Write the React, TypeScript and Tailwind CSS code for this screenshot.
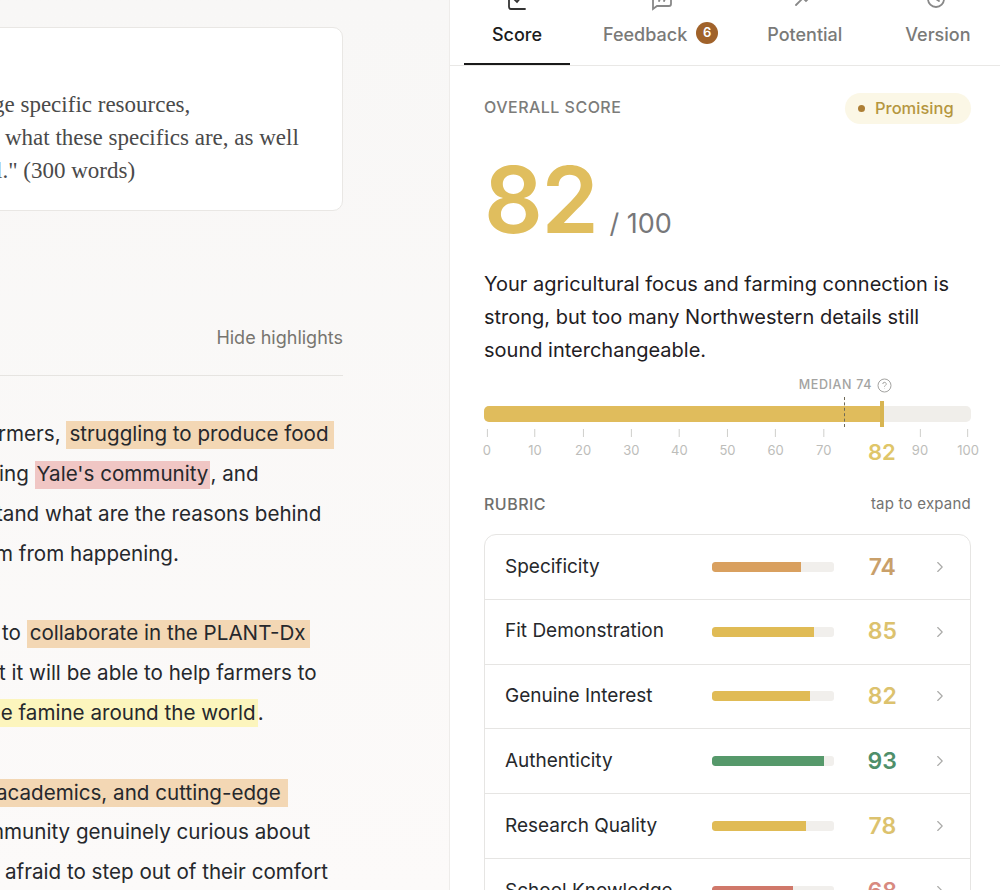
import React from 'react';
import { ChevronRight } from 'lucide-react';

const sans = { fontFamily: 'Inter, sans-serif' };

interface RubricRow {
  name: string;
  score: number;
  barClass: string;
  textClass: string;
}

const rows: RubricRow[] = [
  { name: 'Specificity', score: 74, barClass: 'bg-[#d9a05f]', textClass: 'text-[#c9a06a]' },
  { name: 'Fit Demonstration', score: 85, barClass: 'bg-[#e0bb55]', textClass: 'text-[#dcc26e]' },
  { name: 'Genuine Interest', score: 82, barClass: 'bg-[#e0bb55]', textClass: 'text-[#dcc26e]' },
  { name: 'Authenticity', score: 93, barClass: 'bg-[#56996b]', textClass: 'text-[#4f8f6a]' },
  { name: 'Research Quality', score: 78, barClass: 'bg-[#e0bb55]', textClass: 'text-[#dcc26e]' },
  { name: 'School Knowledge', score: 68, barClass: 'bg-[#d0786a]', textClass: 'text-[#d88a80]' },
];

const ticks = [0, 10, 20, 30, 40, 50, 60, 70, 80, 90, 100];

const Line: React.FC<{ className?: string; children: React.ReactNode }> = ({ className, children }) => (
  <div className={`h-[39.8px] flex items-center whitespace-nowrap ${className || ''}`}>{children}</div>
);

const Mark: React.FC<{ className: string; children: React.ReactNode }> = ({ className, children }) => (
  <span className={`h-7 flex items-center ${className}`}>{children}</span>
);

const App: React.FC = () => {
  return (
    <div className="w-[1000px] h-[890px] flex overflow-hidden bg-white text-[#1f1f1f]" style={sans}>
      {/* essay */}
      <div className="w-[450px] shrink-0 h-full bg-linear-to-b from-[#f8f7f6] to-[#fcfaf9] border-r border-[#eeecea] overflow-hidden pr-[106px] pt-[27px]">
        <div className="h-[184px] -ml-6 bg-white border border-[#e9e7e4] rounded-[10px] pt-[60px] font-['Liberation_Serif',serif] text-[23px] leading-[33px] text-[#4a4a4a] whitespace-nowrap">
          <div className="pl-[16px]">ge specific resources,</div>
          <div className="pl-[28px]">what these specifics are, as well</div>
          <div className="pl-[19px]">l." (300 words)</div>
        </div>
        <div className="mt-[115px] text-right text-[18px] leading-6 text-[#77756f]">Hide highlights</div>
        <div className="mt-[25px] border-t border-[#e6e4e1]" />
        <div className="mt-[39px] text-[20.6px] text-[#26282c]">
          <Line className="-ml-[2px]">rmers,&nbsp;<Mark className="bg-[#f3d7b4] pl-[3px] pr-[5px]">struggling to produce food</Mark></Line>
          <Line className="-ml-[1px]">ing&nbsp;<Mark className="bg-[#f0c6c4] px-[2px]">Yale's community</Mark>, and</Line>
          <Line className="-ml-[4px]">tand what are the reasons behind</Line>
          <Line className="-ml-[5px]">m from happening.</Line>
          <div className="h-[39.8px]" />
          <Line className="ml-[2px]">to&nbsp;<Mark className="bg-[#f3d7b4] pl-[3px] pr-[5px]">collaborate in the PLANT-Dx</Mark></Line>
          <Line className="-ml-[1px]">t it will be able to help farmers to</Line>
          <Line className="-ml-[11px]"><Mark className="bg-[#fcf5bd] pr-[2px]">ce famine around the world</Mark>.</Line>
          <div className="h-[39.8px]" />
          <Line className="-ml-[4px]"><Mark className="bg-[#f3d7b4] pr-[7px]">academics, and cutting-edge</Mark></Line>
          <Line className="-ml-[14px]">mmunity genuinely curious about</Line>
          <Line className="ml-[5px]">afraid to step out of their comfort</Line>
        </div>
      </div>

      {/* score panel */}
      <div className="flex-1 min-w-0 h-full flex flex-col">
        <div className="h-[66px] shrink-0 flex border-b border-[#e9e8e6] text-[18px] font-medium text-[#7a7a78]">
          <div className="w-[106px] ml-[14px] flex flex-col items-center relative text-[#1c1c1c] border-b-2 border-[#1a1a1a] h-[65px]">
            <svg className="absolute -top-[9px]" width="22" height="22" viewBox="0 0 22 22" fill="none" stroke="#333" strokeWidth="1.8" strokeLinecap="round">
              <path d="M3 3v13a2 2 0 0 0 2 2h14" />
              <path d="M8 8l3 3 5-6" />
            </svg>
            <span className="mt-[21px]">Score</span>
          </div>
          <div className="ml-[33px] flex items-start relative pt-[21px]">
            <svg className="absolute -top-[8px] left-[48px]" width="22" height="22" viewBox="0 0 22 22" fill="none" stroke="#888" strokeWidth="1.8" strokeLinecap="round">
              <path d="M2 3v14l4-3h12a2 2 0 0 0 2-2V3" />
              <path d="M8 9l1-2M13 9l1-2" />
            </svg>
            <span>Feedback</span>
            <span className="ml-[9px] mt-[1px] w-[22px] h-[22px] rounded-full bg-[#a0622a] text-white text-[13px] font-semibold flex items-center justify-center">6</span>
          </div>
          <div className="ml-[49px] pt-[21px] relative">
            <svg className="absolute -top-[8px] left-[26px]" width="26" height="22" viewBox="0 0 26 22" fill="none" stroke="#888" strokeWidth="1.8" strokeLinecap="round">
              <path d="M3 13l7-7 3 3 6-6" />
              <path d="M9 3l5 3" />
            </svg>
            <span>Potential</span>
          </div>
          <div className="ml-[63px] pt-[21px] relative">
            <svg className="absolute -top-[8px] left-[20px]" width="22" height="22" viewBox="0 0 22 22" fill="none" stroke="#888" strokeWidth="1.8" strokeLinecap="round">
              <circle cx="11" cy="7" r="8" />
              <path d="M11 3v4l3 2" />
            </svg>
            <span>Version</span>
          </div>
        </div>

        <div className="flex-1 min-h-0 overflow-hidden pl-[34px] pr-[29px]">
          <div className="mt-[25px] h-[32px] flex items-center justify-between">
            <span className="text-[16px] font-medium text-[#7c7c7a] tracking-[0.03em]">OVERALL SCORE</span>
            <span className="h-[31px] mt-[3px] w-[126px] rounded-full bg-[#fbf7e6] flex items-center gap-[10px] pl-[13px] text-[16.5px] font-medium text-[#b5963f]">
              <span className="w-[7px] h-[7px] rounded-full bg-[#ad7f36]" />
              Promising
            </span>
          </div>
          <div className="mt-[32px] flex items-end h-[90px]">
            <span className="text-[92px] leading-[90px] font-semibold text-[#e0be5e] tracking-[-0.015em]">82</span>
            <span className="ml-[12px] mb-[1px] text-[27px] text-[#77777a]">/ 100</span>
          </div>
          <p className="mt-[23px] text-[20px] leading-[33px] text-[#1f2023]">
            Your agricultural focus and farming connection is strong, but too many Northwestern details still sound interchangeable.
          </p>

          <div className="mt-[10px] h-[17px] flex items-center justify-end gap-[5px] pr-[79px] text-[12.5px] font-medium tracking-[0.05em] text-[#a3a3a1]">
            MEDIAN 74
            <svg width="15" height="15" viewBox="0 0 15 15" fill="none" stroke="#a3a3a1" strokeWidth="1">
              <circle cx="7.5" cy="7.5" r="6.5" />
              <path d="M5.8 6a1.7 1.7 0 1 1 2.5 1.5c-.5.3-.8.6-.8 1.2M7.5 10.7v.3" />
            </svg>
          </div>
          <div className="mt-[12px] relative h-[16px] rounded-[5px] bg-[#f0eeea]">
            <div className="h-full w-[81.5%] rounded-l-[5px] bg-[#e0bc5c]" />
            <div className="absolute left-[73.9%] -top-[9px] h-[30px] border-l border-dashed border-[#6f6a58]" />
            <div className="absolute left-[81.3%] -top-[5px] w-[4px] h-[26px] bg-[#d8b552]" />
          </div>
          <div className="mt-[7px] relative h-[38px] text-[13px] text-[#bdbdba]">
            {ticks.map((t) => (
              <div key={t} className="absolute top-0 -translate-x-1/2 flex flex-col items-center" style={{ left: `${t * 0.988 + 0.6}%` }}>
                {t !== 80 && <div className="w-px h-[8px] bg-[#cfcfcc]" />}
                {t !== 80 && <span className="mt-[3px] leading-[20px]">{t}</span>}
              </div>
            ))}
            <span className="absolute left-[384px] top-[9px] text-[22px] leading-[28px] font-semibold text-[#dfc669]">82</span>
          </div>

          <div className="mt-[25px] h-[24px] flex items-center justify-between">
            <span className="text-[16px] font-medium text-[#6f6f6d] tracking-[0.03em]">RUBRIC</span>
            <span className="text-[15px] text-[#737371] tracking-[0.015em]">tap to expand</span>
          </div>

          <div className="mt-[18px] border border-[#e6e5e3] rounded-[12px] overflow-hidden">
            {rows.map((r) => (
              <div key={r.name} className="h-[64.8px] flex items-center border-b border-[#e6e5e3] pl-[20px] pr-[21px]">
                <span className="w-[208px] text-[19px] text-[#26282b]">{r.name}</span>
                <div className="w-[122px] h-[10px] rounded-[3px] bg-[#f1efec] overflow-hidden">
                  <div className={`h-full rounded-l-[3px] ${r.barClass}`} style={{ width: `${r.score === 93 ? 92 : r.score - 1}%` }} />
                </div>
                <span className={`w-[98px] text-center text-[23px] font-semibold ${r.textClass}`}>{r.score}</span>
                <ChevronRight className="ml-auto text-[#a9a9a7]" size={18} strokeWidth={1.5} />
              </div>
            ))}
          </div>
        </div>
      </div>
    </div>
  );
};

export default App;
